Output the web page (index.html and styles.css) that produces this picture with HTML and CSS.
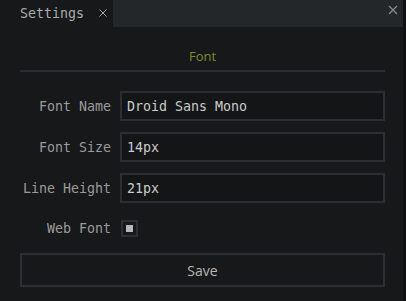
FILE: index.html
```html
<!DOCTYPE html>
<html lang="en">
<head>
    <meta charset="UTF-8">
    <meta name="viewport" content="width=device-width, initial-scale=1.0">
    <title>Settings</title>
    <link rel="stylesheet" href="styles.css">
</head>
<body>
    <div class="tab-bar">
        <div class="tab">
            <span class="tab-title">Settings</span>
            <svg class="tab-close" width="8" height="8" viewBox="0 0 8 8">
                <path d="M0.5 0.5 L7.5 7.5 M7.5 0.5 L0.5 7.5" stroke="#a0a2a4" stroke-width="1"/>
            </svg>
        </div>
        <div class="tab-rest">
            <svg class="pane-close" width="10" height="10" viewBox="0 0 10 10">
                <path d="M1 1 L9 9 M9 1 L1 9" stroke="#8a8d90" stroke-width="1.2"/>
            </svg>
        </div>
    </div>

    <div class="settings">
        <h2 class="section-title">Font</h2>

        <div class="form-row">
            <label class="form-label">Font Name</label>
            <input class="form-input" type="text" value="Droid Sans Mono">
        </div>
        <div class="form-row">
            <label class="form-label">Font Size</label>
            <input class="form-input" type="text" value="14px">
        </div>
        <div class="form-row">
            <label class="form-label">Line Height</label>
            <input class="form-input" type="text" value="21px">
        </div>
        <div class="form-row check-row">
            <label class="form-label">Web Font</label>
            <span class="checkbox"><span class="check-mark"></span></span>
        </div>

        <button class="save">Save</button>
    </div>
</body>
</html>
```

FILE: styles.css
```css
body {
    margin: 0;
    padding: 0;
    background-color: #17181a;
    color: #9b9c9d;
    font-family: 'DejaVu Sans Mono', 'Liberation Mono', monospace;
    font-size: 13px;
    width: 406px;
    height: 301px;
    overflow: hidden;
    border-right: 3px solid #101112;
    box-sizing: border-box;
}

.tab-bar {
    display: flex;
    height: 27px;
}

.tab {
    width: 113px;
    display: flex;
    align-items: center;
    padding-left: 20px;
    box-sizing: border-box;
    background-color: #17181a;
    color: #a9abac;
}

.tab-title {
    font-size: 13.3px;
}

.tab-close {
    display: block;
    margin-left: 15px;
    margin-top: -1px;
}

.tab-rest {
    flex: 1;
    background-color: #24272a;
    display: flex;
    justify-content: flex-end;
    padding: 5px 5px 0 0;
    box-sizing: border-box;
}

.pane-close {
    display: block;
}

.settings {
    padding: 0 18px 0 20px;
}

.section-title {
    margin: 20px 0 0;
    padding-bottom: 5px;
    border-bottom: 2px solid #2b2e30;
    text-align: center;
    font-family: 'Open Sans', 'Noto Sans', sans-serif;
    font-weight: normal;
    font-size: 13px;
    color: #7d8a2c;
}

.form-row {
    display: flex;
    align-items: center;
    margin-top: 11px;
}

.form-row:first-of-type {
    margin-top: 19px;
}

.form-label {
    width: 91px;
    text-align: right;
    margin-right: 9px;
    font-size: 13.3px;
    color: #9a9b9c;
}

.form-input {
    flex: 1;
    height: 30px;
    box-sizing: border-box;
    background-color: #141517;
    border: 2px solid #2c2f31;
    color: #cacbcc;
    font-family: 'DejaVu Sans Mono', 'Liberation Mono', monospace;
    font-size: 13.3px;
    padding: 0 5px;
    outline: none;
}

.check-row {
    margin-top: 17px;
}

.checkbox {
    width: 17px;
    height: 17px;
    box-sizing: border-box;
    border: 2px solid #2c2f31;
    display: flex;
    align-items: center;
    justify-content: center;
    margin-left: 1px;
}

.check-mark {
    width: 7px;
    height: 7px;
    background-color: #b6b8b9;
}

.save {
    display: block;
    width: 100%;
    height: 34px;
    margin-top: 16px;
    background-color: #17181a;
    border: 2px solid #2c2f31;
    color: #b5b7b8;
    font-family: 'Open Sans', 'Noto Sans', sans-serif;
    font-size: 14px;
}
```
